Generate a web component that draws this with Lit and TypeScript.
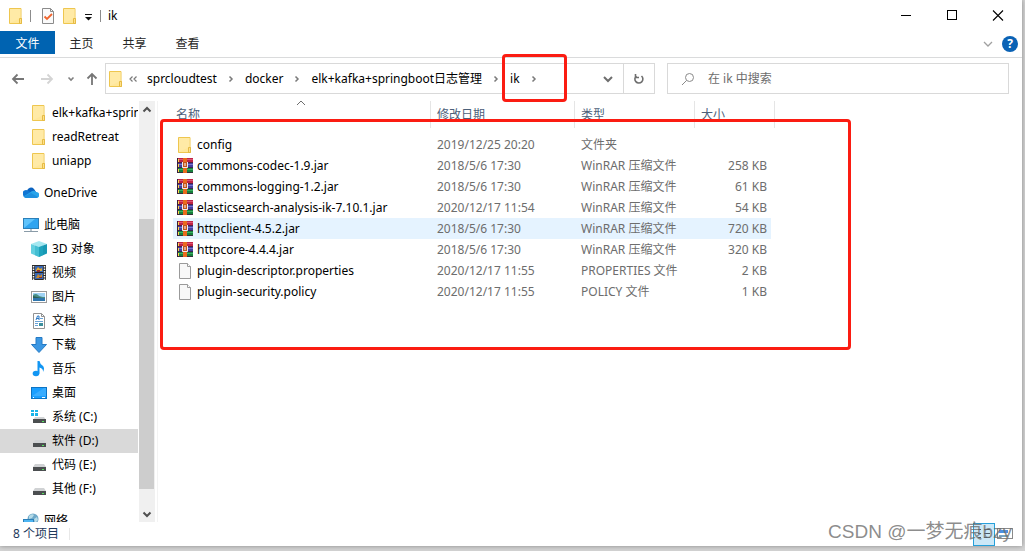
import { LitElement, html, css, svg, nothing } from "lit";
import { customElement, property } from "lit/decorators.js";
import { classMap } from "lit/directives/class-map.js";

const glyphs: Record<string, unknown> = {
  folder: svg`
    <path d="M1.500 .5h11.500v10h.5v5h-12z" fill="#ffe79a" stroke="#eec64f"/>
    <path d="M2 1h10.500v9l-10.500 5z" fill="#ffeaa6"/>
    <path d="M11.500 15.500v-5h2v5z" fill="#ffe08a" stroke="#e5bb45"/>`,
  check: svg`
    <path d="M2.500 .5h8l3 3v12h-11z" fill="#fafafa" stroke="#8b8b8b"/>
    <path d="M10.500 .5v3h3" fill="none" stroke="#8b8b8b"/>
    <path d="M4.500 8.500l2.500 2.500 5-5" fill="none" stroke="#f0642d" stroke-width="1.800"/>`,
  cloud: svg`
    <path d="M4 6a4 4 0 0 1 7-2l2 3-6 3z" fill="#0b63c0"/>
    <path d="M0 10a3.500 3.500 0 0 1 5-4.500l7 5-9 2A3 3 0 0 1 0 10z" fill="#1076d3"/>
    <path d="M7 7.500q3-3 6-.5a3 3 0 0 1 .5 6h-10q-2-.3-3-1.500z" fill="#28a4ea"/>
    <path d="M1 11.500l7-3.500 7 4q-1 1-2 1h-9.500q-1.500 0-2.500-1.500z" fill="#1e90df"/>`,
  pc: svg`
    <rect x=".5" y="1.500" width="15" height="10" fill="#5fc3fb" stroke="#2b7fb8"/>
    <path d="M1 11L12 2h3v9z" fill="#2fa4f0"/>
    <path d="M7 12h2v2H7z" fill="#b8c4cc"/>
    <path d="M1 14.500h14" stroke="#8a9ba8"/>`,
  cube: svg`
    <path d="M8 0l8 3-8 3-8-3z" fill="#a4e7f0"/>
    <path d="M0 3l8 3v10l-8-3.500z" fill="#63cfdf"/>
    <path d="M16 3l-8 3v10l8-3.500z" fill="#1799b4"/>
    <path d="M4 4.500l4 1.500 4-1.500v9.800l-4 1.700-4-1.700z" fill="#24adc6" opacity=".5"/>`,
  film: svg`
    <rect x="1" y="0" width="14" height="15" fill="#2c2c2c"/>
    <path d="M2.500 1v14M13.500 1v14" stroke="#f5f5f5" stroke-width="1.500" stroke-dasharray="1.500 1"/>
    <rect x="4" y="1" width="8" height="13" fill="#3867b4"/>
    <path d="M4 7.500h8" stroke="#222"/>
    <path d="M5 5l2-3 2 2 2-1v3H5z" fill="#e3a72d"/>
    <path d="M5 13l2-4 2 2 2-2v4z" fill="#c9892b"/>
    <path d="M6 5h3v2H6zM8 12h3v1H8z" fill="#8c2f2f"/>`,
  photo: svg`
    <rect x=".5" y="2.500" width="15" height="11" fill="#fff" stroke="#9a9a9a"/>
    <path d="M2 4h12v5H2z" fill="#9fd3f5"/>
    <path d="M2 6q3-2 5 0t7 2v3H2z" fill="#4a8f86"/>
    <path d="M2 9h12v3H2z" fill="#2f76ad"/>
    <path d="M2 7l4 1 5 1H2z" fill="#2d5d54"/>`,
  doc: svg`
    <path d="M2.500 .5h8l3 3v12h-11z" fill="#fff" stroke="#929292"/>
    <path d="M10.500 .5v3h3" fill="none" stroke="#929292"/>
    <path d="M5 7l1.500-4H8v4M5.500 5.500H8" fill="none" stroke="#2b78c5"/>
    <path d="M9 5.500h3M4 8.500h8M4 10.500h3M4 12.500h3" stroke="#69a3d7"/>
    <path d="M8 10h4v3H8z" fill="#3c8f9c"/>`,
  down: svg`<path d="M5 .5h6v7h4.500L8 15.500.5 7.500H5z" fill="#3b97e3" stroke="#257ac4"/>`,
  note: svg`
    <ellipse cx="5" cy="12.500" rx="3.300" ry="2.800" fill="#1296f3"/>
    <path d="M6.500 0h2q.5 3 3 4.500 2.800 2.500.5 6.500 .5-3.500-3.500-4.500v6h-2z" fill="#1296f3"/>`,
  desktop: svg`
    <rect x=".5" y="2.500" width="15" height="11" fill="#1a9fff" stroke="#0d74c4"/>
    <path d="M1 11L13 3h2v8z" fill="#3aadff"/>
    <path d="M2 12.500h1M11 12.500h3" stroke="#fff"/>`,
  sysdrive: svg`
    <path d="M0 1h3v2H0zM4 1h3v2H4zM0 4h3v3H0zM4 4h3v3H4z" fill="#19b4ea"/>
    <path d="M4 8h9l2 3H2z" fill="#d2d4d6"/>
    <rect x="2" y="10" width="13" height="4" fill="#4b4e50"/>
    <path d="M11 12h2v1h-2z" fill="#57e25e"/>`,
  drive: svg`
    <path d="M4 7h9l2 3H2z" fill="#d0d2d4"/>
    <rect x="2" y="10" width="13" height="4" fill="#4b4e50"/>
    <path d="M11 12h2v1h-2z" fill="#57e25e"/>`,
  network: svg`
    <circle cx="10" cy="6" r="5.500" fill="#6fa9c9"/>
    <path d="M6 3q3-3 5-1l-2 3-3 1zM11 6l3-2 1 3-3 3z" fill="#b5dbe8"/>
    <rect x=".5" y="6.500" width="10" height="7" fill="#4db5f2" stroke="#2b7fb8"/>`,
  rar: svg`
    <path d="M0 0h16v5H0z" fill="#c02345"/>
    <path d="M1 1h15v1H1z" fill="#dc5473"/>
    <path d="M0 5h16v5H0z" fill="#4340a0"/>
    <path d="M1 6h15v1H1z" fill="#7a74cc"/>
    <path d="M0 10h16v5H0z" fill="#17803c"/>
    <path d="M1 11h15v1H1z" fill="#3bb062"/>
    <path d="M0 4.500h16M0 9.500h16M0 14.500h16" stroke="#3a1d3c" stroke-opacity=".8"/>
    <path d="M0 0h1v15H0z" fill="#3a1d3c"/>
    <path d="M1 1h1v3H1zM1 6h1v3H1zM1 11h1v3H1z" fill="#ffd84a"/>
    <path d="M6 0h4v15H6z" fill="#ea6a1e"/>
    <path d="M5 4h6v6H5z" fill="#c4541c"/>
    <path d="M5.500 4v5.500h5V4" fill="none" stroke="#ecebf5"/>
    <path d="M8 5v3" stroke="#fff"/>`,
  file: svg`
    <path d="M2.500 .5h8l3 3v12h-11z" fill="#f8f8f8" stroke="#9a9a9a"/>
    <path d="M10.500 .5v3h3" fill="#fff" stroke="#9a9a9a"/>`,
  back: svg`<path d="M14 8H3M7.500 3.500L3 8l4.500 4.500" fill="none" stroke="#767676" stroke-width="1.800"/>`,
  forward: svg`<path d="M2 8h11M8.500 3.500L13 8l-4.500 4.500" fill="none" stroke="#d4d4d4" stroke-width="1.800"/>`,
  up: svg`<path d="M8 14V3M3.500 7.500L8 3l4.500 4.500" fill="none" stroke="#767676" stroke-width="1.800"/>`,
  chevDown: svg`<path d="M4 6l4 4 4-4" fill="none" stroke="#6e6e6e" stroke-width="2"/>`,
  chevSmall: svg`<path d="M5.500 6.500L8 9l2.500-2.500" fill="none" stroke="#808080" stroke-width="1.600"/>`,
  chevThin: svg`<path d="M4 6l4 4 4-4" fill="none" stroke="#a0a0a0" stroke-width="1.300"/>`,
  chevUpThin: svg`<path d="M4 10l4-4 4 4" fill="none" stroke="#6e6e6e"/>`,
  chevRight: svg`<path d="M6.500 5.500L9 8l-2.500 2.500" fill="none" stroke="#7a7a7a" stroke-width="1.500"/>`,
  chevLeft2: svg`<path d="M7.500 5.500L5 8l2.500 2.500M11.500 5.500L9 8l2.500 2.500" fill="none" stroke="#7a7a7a" stroke-width="1.200"/>`,
  scrollUp: svg`<path d="M4.500 9.500L8 6l3.500 3.500" fill="none" stroke="#505050" stroke-width="2"/>`,
  scrollDown: svg`<path d="M4.500 6.500L8 10l3.500-3.500" fill="none" stroke="#505050" stroke-width="2"/>`,
  refresh: svg`<path d="M5.500 4.800a4 4 0 1 0 5 .2M4.500 3v3.500H8" fill="none" stroke="#6e6e6e" stroke-width="1.600"/>`,
  search: svg`<circle cx="9.500" cy="6.500" r="4" fill="none" stroke="#8a8a8a"/><path d="M6.500 9.500L2 14" stroke="#8a8a8a"/>`,
  customize: svg`<path d="M5 6.500h7" stroke="#111"/><path d="M5 9h7l-3.500 3.500z" fill="#111"/>`,
  min: svg`<path d="M3 7.500h10" stroke="#000"/>`,
  max: svg`<rect x="3.500" y="2.500" width="9" height="9" fill="none" stroke="#000"/>`,
  close: svg`<path d="M3 2.500l10 10M13 2.500l-10 10" stroke="#000" stroke-width="1.100"/>`,
  details: svg`
    <path d="M2 3.500h3M2 7.500h3M2 11.500h3M8 3.500h6M8 7.500h6M8 11.500h6" stroke="#4b5a66"/>`,
  tiles: svg`
    <rect x=".5" y="2.500" width="15" height="10" fill="#fff" stroke="#8a8a8a"/>
    <path d="M2 4h9v3H2z" fill="#4a90e2"/><path d="M2 9h9v2H2z" fill="#7aa5c4"/>`,
};

@customElement("ui-icon")
class UiIcon extends LitElement {
  @property() name = "";
  static styles = css`
    :host { display: block; flex: none; width: 16px; height: 16px; }
    svg { display: block; width: 16px; height: 16px; }
  `;
  render() {
    return html`<svg viewBox="0 0 16 16" aria-hidden="true">${glyphs[this.name]}</svg>`;
  }
}

interface NavItem { icon: string; label: string; root?: boolean; selected?: boolean; }

const navGroups: NavItem[][] = [
  [
    { icon: "folder", label: "elk+kafka+springboot日志管理" },
    { icon: "folder", label: "readRetreat" },
    { icon: "folder", label: "uniapp" },
  ],
  [{ icon: "cloud", label: "OneDrive", root: true }],
  [
    { icon: "pc", label: "此电脑", root: true },
    { icon: "cube", label: "3D 对象" },
    { icon: "film", label: "视频" },
    { icon: "photo", label: "图片" },
    { icon: "doc", label: "文档" },
    { icon: "down", label: "下载" },
    { icon: "note", label: "音乐" },
    { icon: "desktop", label: "桌面" },
    { icon: "sysdrive", label: "系统 (C:)" },
    { icon: "drive", label: "软件 (D:)", selected: true },
    { icon: "drive", label: "代码 (E:)" },
    { icon: "drive", label: "其他 (F:)" },
  ],
  [{ icon: "network", label: "网络", root: true }],
];

const files = [
  { icon: "folder", name: "config", date: "2019/12/25 20:20", type: "文件夹", size: "" },
  { icon: "rar", name: "commons-codec-1.9.jar", date: "2018/5/6 17:30", type: "WinRAR 压缩文件", size: "258 KB" },
  { icon: "rar", name: "commons-logging-1.2.jar", date: "2018/5/6 17:30", type: "WinRAR 压缩文件", size: "61 KB" },
  { icon: "rar", name: "elasticsearch-analysis-ik-7.10.1.jar", date: "2020/12/17 11:54", type: "WinRAR 压缩文件", size: "54 KB" },
  { icon: "rar", name: "httpclient-4.5.2.jar", date: "2018/5/6 17:30", type: "WinRAR 压缩文件", size: "720 KB", hover: true },
  { icon: "rar", name: "httpcore-4.4.4.jar", date: "2018/5/6 17:30", type: "WinRAR 压缩文件", size: "320 KB" },
  { icon: "file", name: "plugin-descriptor.properties", date: "2020/12/17 11:55", type: "PROPERTIES 文件", size: "2 KB" },
  { icon: "file", name: "plugin-security.policy", date: "2020/12/17 11:55", type: "POLICY 文件", size: "1 KB" },
];

@customElement("app-root")
class AppRoot extends LitElement {
  static styles = css`
    :host {
      display: block;
      box-sizing: border-box;
      height: 100vh;
      padding: 0 3px 5px 0;
      overflow: hidden;
      background: #d4d4d4;
      font: 12px/20px "Noto Sans", "Noto Sans CJK SC", sans-serif;
      color: #000;
    }
    * { box-sizing: border-box; }
    button, input { font: inherit; color: inherit; margin: 0; padding: 0; border: 0; background: none; }
    a { color: inherit; text-decoration: none; }
    .window {
      position: relative;
      display: flex;
      flex-direction: column;
      height: 100%;
      background: #fff;
      box-shadow: 0 0 5px #888;
    }
    .titlebar { display: flex; align-items: center; height: 31px; padding-left: 8px; }
    .titlebar .sep { width: 1px; height: 12px; background: #8c8c8c; }
    .quick { display: flex; align-items: center; flex: 1; }
    .quick .sep { margin: 0 9px 0 6px; }
    .quick .sep.last { margin: 0 7px 0 4px; }
    .quick .tool { margin-right: 6px; }
    .quick .tool.create { margin-right: 2px; }
    .quick .tool.more { margin-right: 0; }
    .title { font-weight: 400; font-size: 12px; margin: 0; }
    .caption { display: flex; margin-right: 1px; }
    .caption button { display: grid; place-items: center; width: 46px; height: 31px; }
    .ribbon { display: flex; align-items: flex-start; height: 27px; border-bottom: 1px solid #dadbdc; }
    .ribbon .tab { width: 53px; height: 23px; line-height: 25px; text-align: center; color: #262626; }
    .ribbon .tab.file { width: 55px; background: #0063b1; color: #fff; }
    .ribbon .end { display: flex; align-items: center; gap: 6px; height: 26px; margin-left: auto; padding-right: 4px; }
    .help {
      width: 16px; height: 16px; border-radius: 8px; background: #0a62b5; color: #fff;
      font-weight: 700; line-height: 16px; text-align: center;
    }
    .nav { display: flex; align-items: center; height: 43px; padding: 0 13px 2px 10px; }
    .arrows { display: flex; align-items: center; width: 95px; }
    .arrows .gap { margin-left: 13px; }
    .arrows .recent { margin-left: 8px; }
    .arrows .upward { margin-left: 5px; }
    .address { display: flex; flex: 548 1 0; height: 31px; border: 1px solid #d9d9d9; margin-right: 12px; }
    .crumbs { display: flex; align-items: center; flex: 1; padding-left: 2px; min-width: 0; white-space: nowrap; }
    .crumbs .more { margin: 0 6px 0 1px; }
    .crumbs .arrow { margin: 0 6px; }
    .address .drop { display: grid; place-items: center; width: 30px; }
    .address .reload { display: grid; place-items: center; width: 31px; border-left: 1px solid #d9d9d9; }
    .search { display: flex; align-items: center; flex: 328 1 0; height: 31px; padding-left: 12px; gap: 12px; border: 1px solid #d9d9d9; }
    .search input { flex: 1; min-width: 0; outline: 0; height: 20px; }
    .search input::placeholder { color: #6d6d6d; opacity: 1; }
    .body { display: flex; flex: 1; min-height: 0; }
    .tree { width: 139px; overflow: hidden; padding-right: 1px; }
    .tree ul { list-style: none; margin: 0 0 8px; padding: 0; }
    .tree a { display: flex; align-items: center; gap: 5px; height: 24px; padding-left: 31px; overflow: hidden; white-space: nowrap; }
    .tree a.root { padding-left: 23px; }
    .tree a.selected { background: #d9d9d9; }
    .scroll { display: flex; flex-direction: column; align-items: center; width: 16px; background: #f0f0f0; }
    .scroll button { display: grid; place-items: center; width: 16px; height: 17px; }
    .track { display: flex; flex-direction: column; flex: 1; width: 15px; align-self: flex-start; }
    .track .before { flex: 101; }
    .track .thumb { flex: 270; background: #cdcdcd; }
    .track .after { flex: 16; }
    .content { flex: 1; margin-left: 2px; padding-left: 15px; border-left: 1px solid #f3f3f3; }
    table { width: 602px; table-layout: fixed; border-collapse: separate; border-spacing: 0; }
    .c-name { width: 258px; }
    .c-date { width: 144px; }
    .c-type { width: 120px; }
    .c-size { width: 80px; }
    th { position: relative; height: 27px; padding: 0 0 0 6px; border-right: 1px solid #e5e5e5; font-weight: 400; text-align: left; color: #4c607a; }
    th:first-child { padding-left: 3px; }
    .sort { position: absolute; top: -6px; left: 50%; margin-left: -9px; }
    .spacer td { height: 6px; }
    td { height: 21px; padding: 0 0 0 6px; color: #6d6d6d; white-space: nowrap; line-height: 20px; }
    td.name { padding-left: 4px; color: #000; }
    td.size { padding: 0 4px 0 0; border-right: 4px solid transparent; background-clip: padding-box; text-align: right; }
    tr.hover td { background-color: #e5f3ff; }
    .entry { display: flex; align-items: center; gap: 4px; height: 21px; }
    .status { display: flex; align-items: center; height: 24px; padding: 0 9px 0 13px; color: #1e395b; }
    .status .count { height: 12px; line-height: 12px; padding-right: 10px; border-right: 1px solid #e8e8e8; }
    .views { display: flex; align-items: center; margin-left: auto; gap: 2px; }
    .views button { display: grid; place-items: center; height: 23px; width: 16px; }
    .views button.on { width: 22px; border: 1px solid #26a0da; background: #cce8f7; }
    .mark { position: absolute; border: 3px solid #fb1c12; border-radius: 4px; pointer-events: none; }
    .mark.path { left: 502px; top: 54px; width: 65px; height: 48px; }
    .mark.list { left: 160px; top: 119px; width: 691px; height: 231px; }
    .credit {
      position: absolute; right: 10px; bottom: 0; pointer-events: none; white-space: nowrap;
      font: 19px/28px "Liberation Sans", "Noto Sans CJK SC", sans-serif; color: rgba(110, 110, 110, 0.8);
    }
  `;

  private crumb(label: string) {
    return html`<a href="#">${label}</a><ui-icon class="arrow" name="chevRight"></ui-icon>`;
  }

  render() {
    return html`
      <div class="window">
        <header class="titlebar">
          <div class="quick">
            <ui-icon name="folder"></ui-icon>
            <span class="sep"></span>
            <button class="tool" aria-label="属性"><ui-icon name="check"></ui-icon></button>
            <button class="tool create" aria-label="新建文件夹"><ui-icon name="folder"></ui-icon></button>
            <button class="tool more" aria-label="自定义快速访问工具栏"><ui-icon name="customize"></ui-icon></button>
            <span class="sep last"></span>
            <h1 class="title">ik</h1>
          </div>
          <div class="caption">
            <button aria-label="最小化"><ui-icon name="min"></ui-icon></button>
            <button aria-label="最大化"><ui-icon name="max"></ui-icon></button>
            <button aria-label="关闭"><ui-icon name="close"></ui-icon></button>
          </div>
        </header>
        <div class="ribbon">
          <button class="tab file">文件</button>
          <button class="tab">主页</button>
          <button class="tab">共享</button>
          <button class="tab">查看</button>
          <div class="end">
            <button aria-label="展开功能区"><ui-icon name="chevThin"></ui-icon></button>
            <button class="help">?</button>
          </div>
        </div>
        <div class="nav">
          <div class="arrows">
            <button aria-label="后退"><ui-icon name="back"></ui-icon></button>
            <button class="gap" aria-label="前进"><ui-icon name="forward"></ui-icon></button>
            <button class="recent" aria-label="最近浏览的位置"><ui-icon name="chevSmall"></ui-icon></button>
            <button class="upward" aria-label="向上"><ui-icon name="up"></ui-icon></button>
          </div>
          <div class="address">
            <div class="crumbs">
              <ui-icon name="folder"></ui-icon>
              <ui-icon class="more" name="chevLeft2"></ui-icon>
              ${["sprcloudtest", "docker", "elk+kafka+springboot日志管理", "ik"].map((c) => this.crumb(c))}
            </div>
            <button class="drop" aria-label="以前的位置"><ui-icon name="chevDown"></ui-icon></button>
            <button class="reload" aria-label="刷新"><ui-icon name="refresh"></ui-icon></button>
          </div>
          <label class="search">
            <ui-icon name="search"></ui-icon>
            <input type="text" placeholder="在 ik 中搜索" aria-label="搜索" />
          </label>
        </div>
        <div class="body">
          <nav class="tree">
            ${navGroups.map((group) => html`<ul>
              ${group.map((n) => html`<li>
                <a href="#" class=${classMap({ root: !!n.root, selected: !!n.selected })}>
                  <ui-icon name=${n.icon}></ui-icon><span>${n.label}</span>
                </a>
              </li>`)}
            </ul>`)}
          </nav>
          <div class="scroll">
            <button aria-label="向上滚动"><ui-icon name="scrollUp"></ui-icon></button>
            <div class="track"><div class="before"></div><div class="thumb"></div><div class="after"></div></div>
            <button aria-label="向下滚动"><ui-icon name="scrollDown"></ui-icon></button>
          </div>
          <main class="content">
            <table>
              <colgroup><col class="c-name" /><col class="c-date" /><col class="c-type" /><col class="c-size" /></colgroup>
              <thead>
                <tr>
                  <th>名称<ui-icon class="sort" name="chevUpThin"></ui-icon></th>
                  <th>修改日期</th><th>类型</th><th>大小</th>
                </tr>
              </thead>
              <tbody>
                <tr class="spacer"><td colspan="4"></td></tr>
                ${files.map((f) => html`<tr class=${f.hover ? "hover" : nothing}>
                  <td class="name"><div class="entry"><ui-icon name=${f.icon}></ui-icon><span>${f.name}</span></div></td>
                  <td>${f.date}</td><td>${f.type}</td><td class="size">${f.size}</td>
                </tr>`)}
              </tbody>
            </table>
          </main>
        </div>
        <footer class="status">
          <span class="count">8 个项目</span>
          <div class="views">
            <button class="on" aria-label="详细信息"><ui-icon name="details"></ui-icon></button>
            <button aria-label="大缩略图"><ui-icon name="tiles"></ui-icon></button>
          </div>
        </footer>
        <div class="mark path"></div>
        <div class="mark list"></div>
        <div class="credit">CSDN @一梦无痕bzy</div>
      </div>
    `;
  }
}
